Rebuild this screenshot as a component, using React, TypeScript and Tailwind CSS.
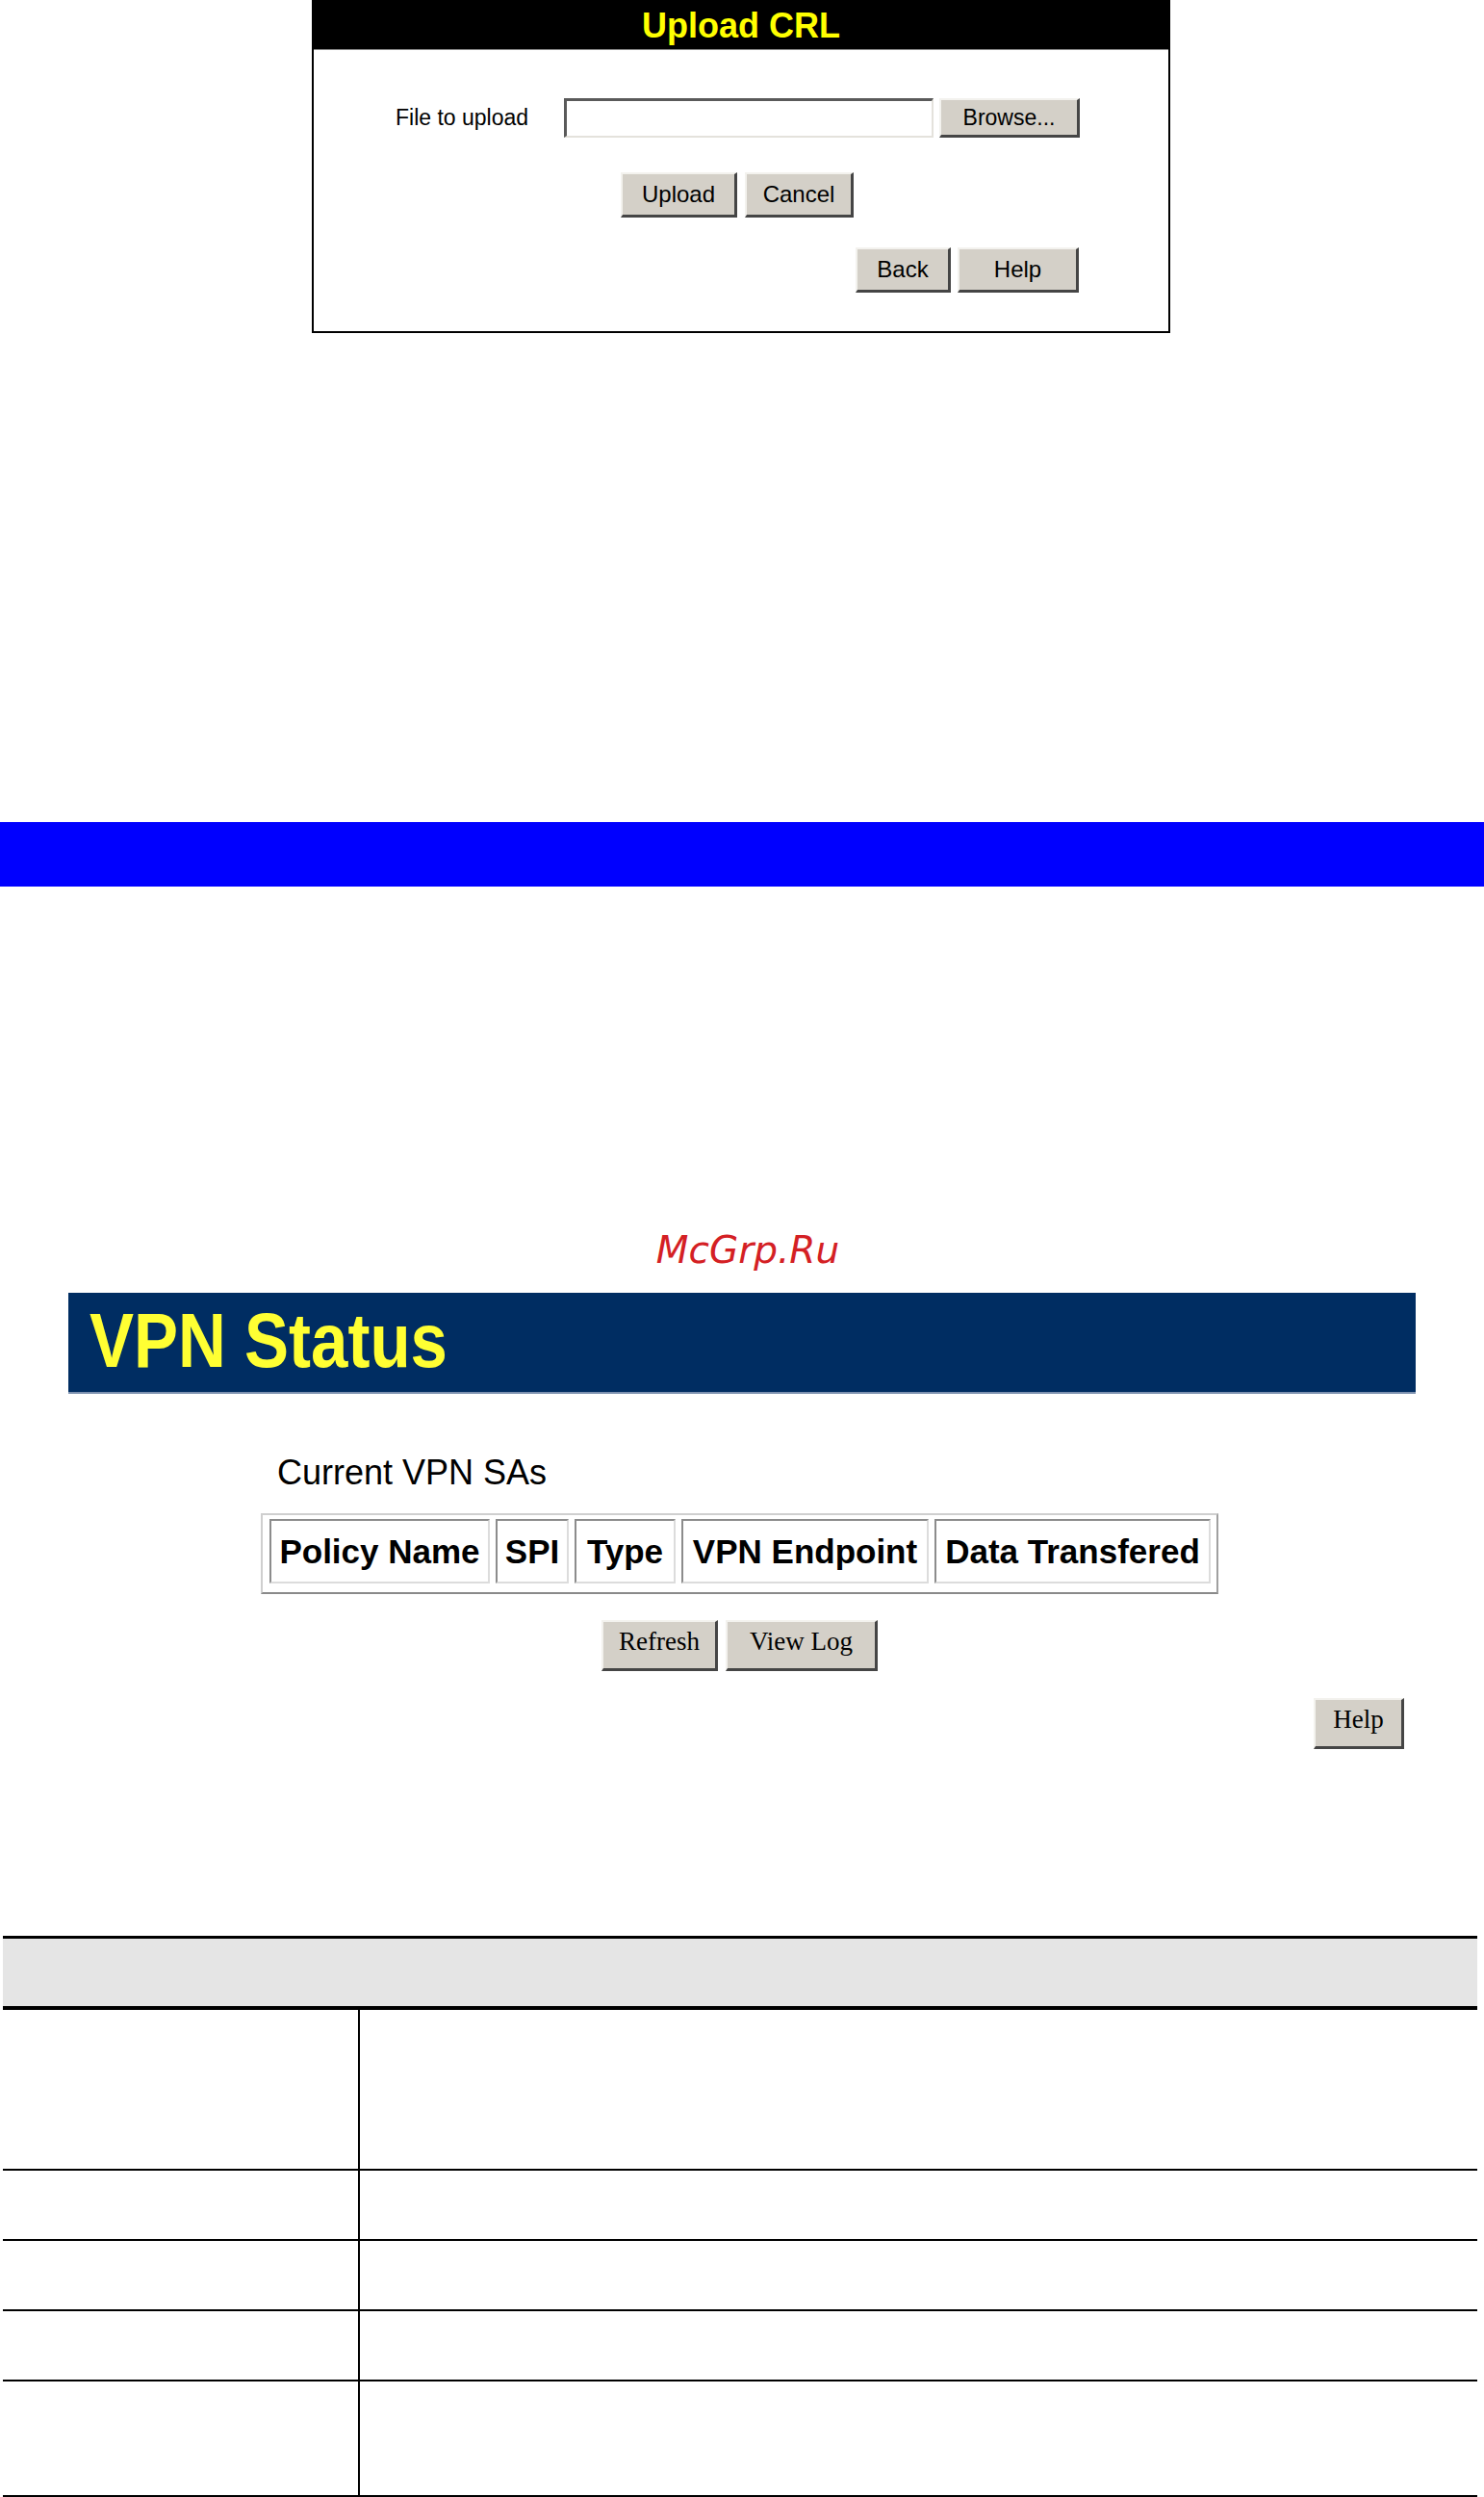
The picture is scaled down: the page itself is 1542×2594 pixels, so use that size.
import React from "react";

const sans = "font-['Liberation_Sans',Arial,sans-serif]";
const serif = "font-['Liberation_Serif','Times_New_Roman',serif]";

function WinButton({ label, className }: { label: string; className: string }) {
  return (
    <button
      type="button"
      className={`flex items-center justify-center border-t-2 border-l-2 border-r-[3px] border-b-[3px] border-t-[#f3f2ee] border-l-[#f3f2ee] border-r-[#454545] border-b-[#454545] bg-[#d4d0c8] text-black leading-none ${className}`}
    >
      {label}
    </button>
  );
}

function UploadCrl() {
  return (
    <div className="ml-[324px] flex h-[346px] w-[892px] flex-col border-x-2 border-b-2 border-black">
      <div className="flex h-[52px] items-center justify-center border-b border-[#8a8a8a] bg-black pt-[3px]">
        <h1 className="text-[36px] font-bold leading-none text-[#ffff00]">Upload CRL</h1>
      </div>

      <div className="mt-[50px] flex items-center pl-[85px] text-[23px]">
        <label className="w-[175px] leading-none">File to upload</label>
        <div className="h-[41px] w-[384px] border-t-[3px] border-l-[3px] border-r-2 border-b-2 border-t-[#5a5a5a] border-l-[#5a5a5a] border-r-[#e4e2dc] border-b-[#e4e2dc] bg-white" />
        <WinButton label="Browse..." className="ml-[6px] h-[41px] w-[146px] text-[23px]" />
      </div>

      <div className="mt-[36px] flex gap-[8px] pl-[319px]">
        <WinButton label="Upload" className="h-[47px] w-[121px] text-[24px]" />
        <WinButton label="Cancel" className="h-[47px] w-[113px] text-[24px]" />
      </div>

      <div className="mt-[31px] flex gap-[7px] pl-[563px]">
        <WinButton label="Back" className="h-[47px] w-[99px] text-[24px]" />
        <WinButton label="Help" className="h-[47px] w-[126px] text-[24px]" />
      </div>
    </div>
  );
}

const columns = [
  { name: "Policy Name", width: "w-[229px]" },
  { name: "SPI", width: "w-[76px]" },
  { name: "Type", width: "w-[105px]" },
  { name: "VPN Endpoint", width: "w-[257px]" },
  { name: "Data Transfered", width: "w-[287px]" },
];

function VpnStatus() {
  return (
    <>
      <div className="ml-[71px] mt-[25px] flex h-[105px] w-[1400px] items-center border-b-2 border-[#7d91b0] bg-[#002d62] pb-[4px] pl-[22px]">
        <h2 className="scale-y-[1.16] text-[69px] font-bold leading-none text-[#ffff33]">VPN Status</h2>
      </div>

      <p className="mt-[64px] pl-[288px] text-[36px] leading-none">Current VPN SAs</p>

      <div className="ml-[271px] mt-[24px] h-[84px] w-[995px] border-2 border-[#cfcfcf] border-b-[#8a8a8a] border-r-[#a0a0a0] pl-[7px] pt-[4px]">
        <div className="flex gap-[6px]">
          {columns.map((col) => (
            <div
              key={col.name}
              className={`flex h-[67px] items-center justify-center border-2 border-t-[#8c8c8c] border-l-[#8c8c8c] border-b-[#dcdcdc] border-r-[#dcdcdc] text-[35px] font-bold leading-none ${col.width}`}
            >
              {col.name}
            </div>
          ))}
        </div>
      </div>

      <div className={`ml-[625px] mt-[27px] flex gap-[8px] ${serif}`}>
        <WinButton label="Refresh" className="h-[53px] w-[121px] pb-[8px] text-[27px]" />
        <WinButton label="View Log" className="h-[53px] w-[158px] pb-[8px] text-[27px]" />
      </div>

      <div className={`ml-[1365px] mt-[28px] flex ${serif}`}>
        <WinButton label="Help" className="h-[53px] w-[94px] pb-[8px] text-[27px]" />
      </div>
    </>
  );
}

// heights include the bottom rule
const rowHeights = ["h-[167px]", "h-[73px]", "h-[73px]", "h-[73px]", "h-[120px]"];

function ParamTable() {
  return (
    <div className="ml-[3px] mt-[194px] w-[1532px] border-t-[3px] border-black">
      <div className="h-[74px] border-b-4 border-black bg-[#e5e5e5]" />
      {rowHeights.map((h, i) => (
        <div key={i} className={`grid grid-cols-[371px_1fr] border-b-2 border-black ${h}`}>
          <div className="border-r-2 border-black" />
          <div />
        </div>
      ))}
    </div>
  );
}

export default function App() {
  return (
    <div className={`w-[1542px] bg-white text-black ${sans}`}>
      <UploadCrl />

      <div className="mt-[508px] h-[67px] w-full bg-[#0000ff]" />

      <p className="mt-[358px] h-[39px] pl-[12px] text-center font-['DejaVu_Sans',sans-serif] text-[39px] italic leading-[39px] text-[#d42024]">
        McGrp.Ru
      </p>

      <VpnStatus />
      <ParamTable />
    </div>
  );
}
